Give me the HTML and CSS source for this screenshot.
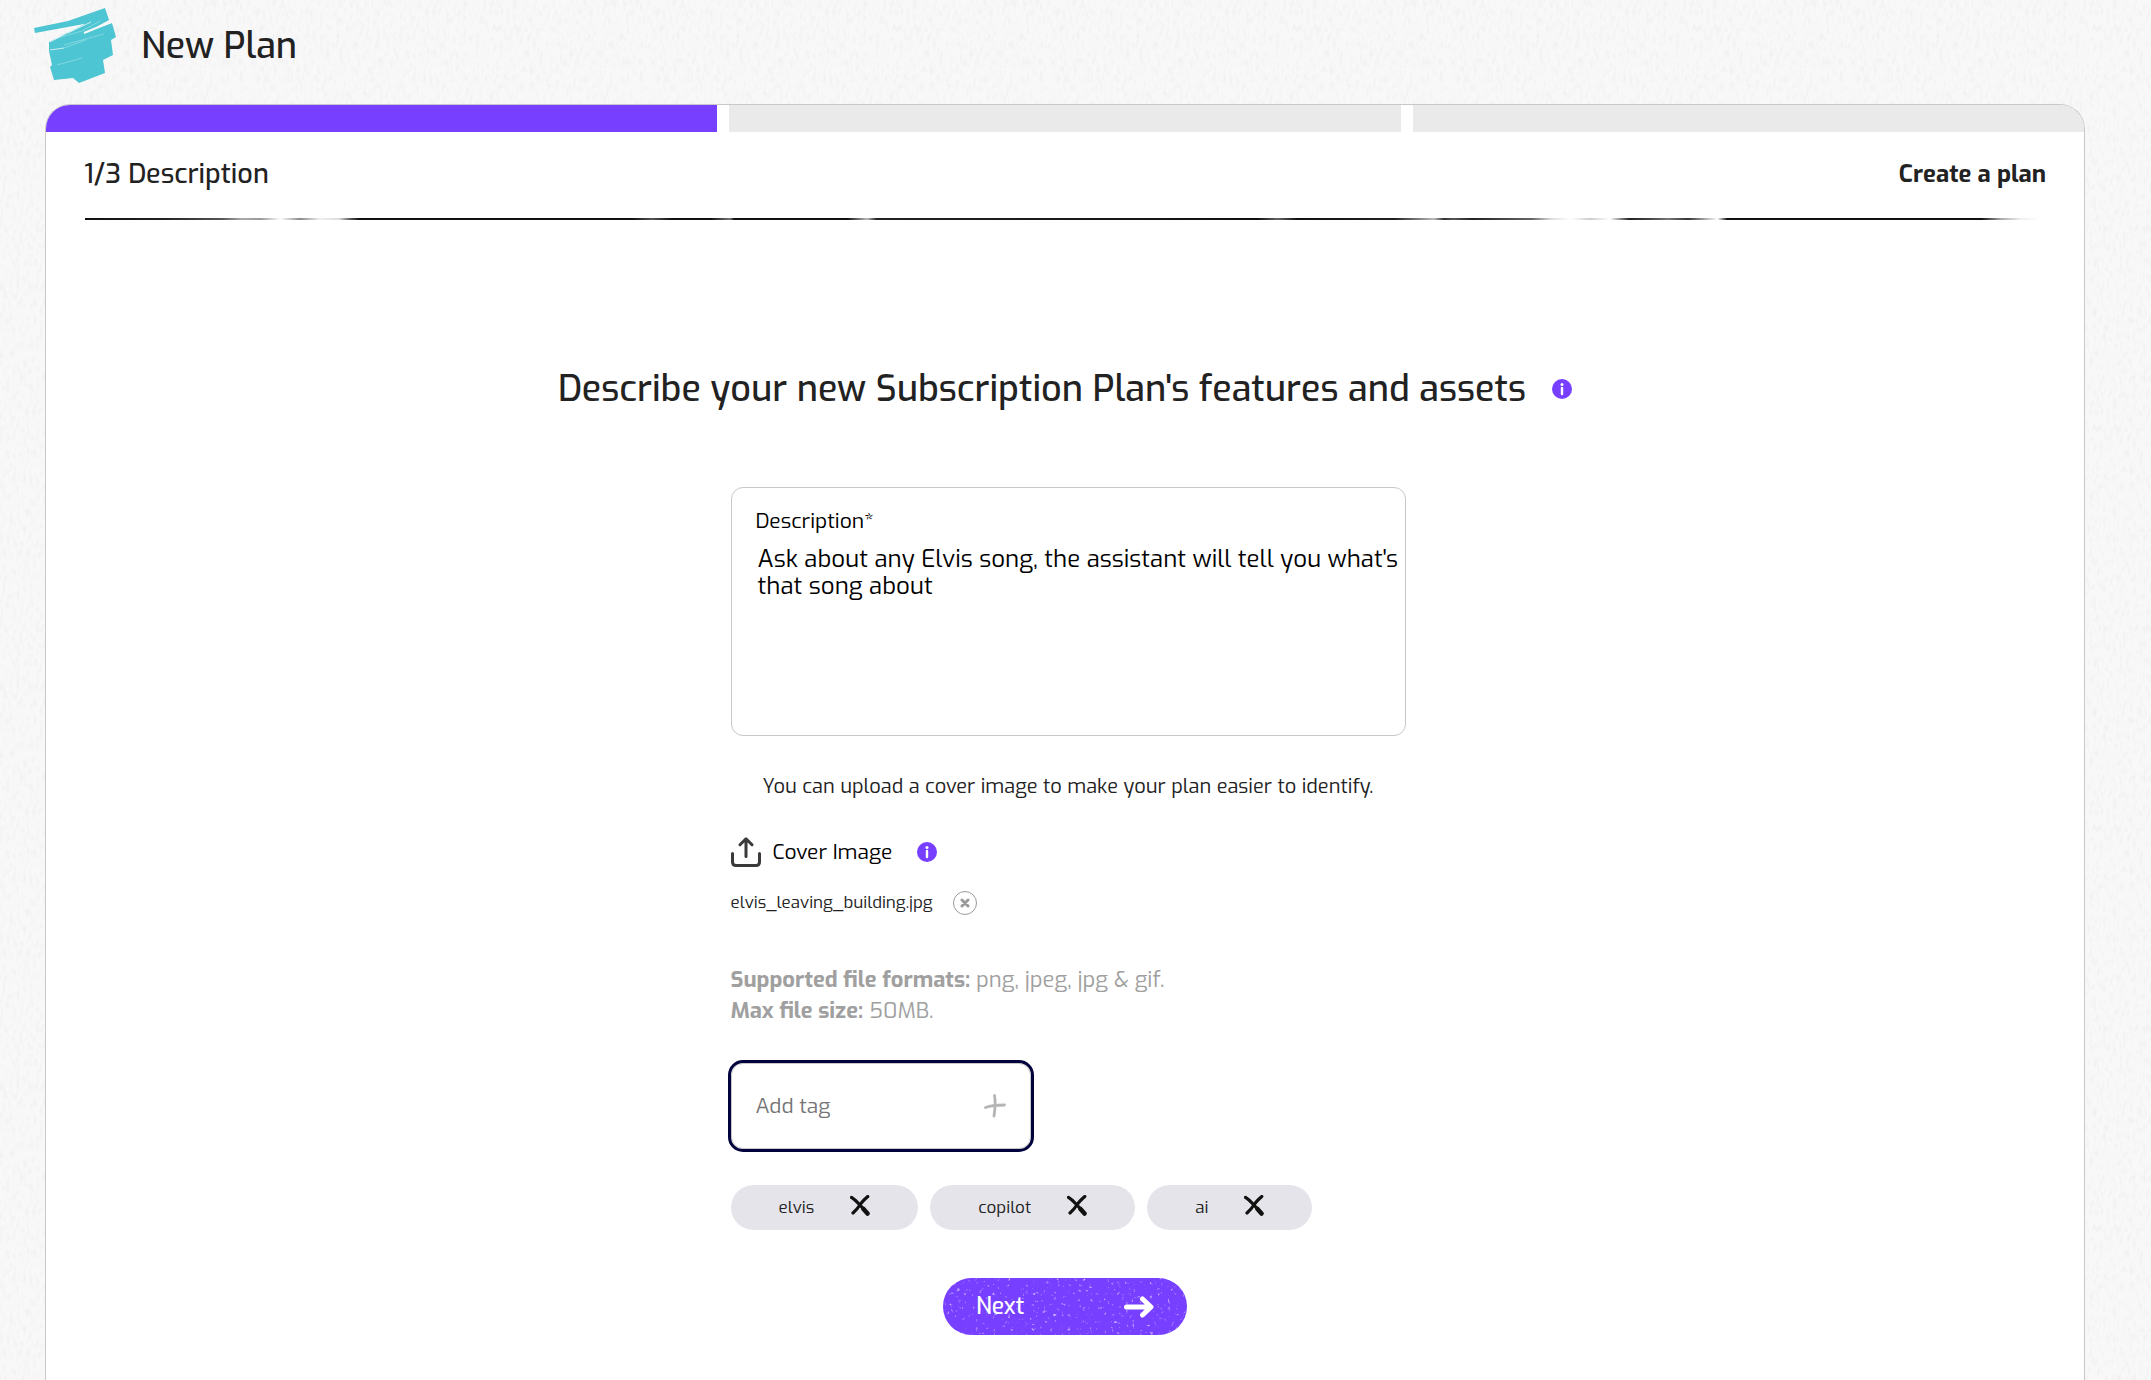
FILE: index.html
```html
<!DOCTYPE html>
<html lang="en">
<head>
<meta charset="utf-8">
<meta name="viewport" content="width=device-width, initial-scale=1">
<title>New Plan</title>
<link rel="stylesheet" href="styles.css">
</head>
<body>
<svg class="sprite" aria-hidden="true">
  <symbol id="cross" viewBox="0 0 20 21">
    <path d="M1.5 2.4Q5 4.5 9.5 9.5T17.500 18.500M17.800 1.500Q12 6.500 9.500 10.500T3 18" fill="none" stroke="#111" stroke-width="3.200" stroke-linecap="round"/>
    <path d="M13.500 14l4 4.500" stroke="#111" stroke-width="4.500" stroke-linecap="round"/>
  </symbol>
  <symbol id="info" viewBox="0 0 20 20">
    <circle cx="10" cy="10" r="10" fill="#773fff"/>
    <circle cx="10" cy="5.500" r="1.500" fill="#fff"/>
    <path d="M10 9v6" stroke="#fff" stroke-width="2.400" stroke-linecap="round"/>
  </symbol>
</svg>

<header class="page-header">
  <svg class="logo" viewBox="0 0 82 76" aria-hidden="true">
    <path fill="#4dc5d2" d="M0 20L34 13 71 0 75 12 53 24 78 15 82 29 77 32 79 47 69 52 71 65 45 75 39 70 20 72 16 59 18 57 15 43 15 34 50 16 1 25Z"/>
    <path fill="none" stroke="#fff" d="M16 42l14-2M34 25l23-11M16 34l34-18" opacity=".7"/>
    <path fill="none" stroke="#fff" d="M20 31l28-8 18-10M23 57l25-7M30 37l40-11M30 40l22-8" opacity=".3"/>
    <path fill="none" stroke="#f7f7f7" stroke-width="2" d="M50 25l27-11"/>
  </svg>
  <h1 class="page-title">New Plan</h1>
</header>

<main class="card">
  <div class="steps">
    <span class="step step-active"></span>
    <span class="step"></span>
    <span class="step"></span>
  </div>

  <div class="card-header">
    <h2 class="step-name">1/3 Description</h2>
    <p class="task-name">Create a plan</p>
  </div>
  <div class="brush-line"></div>

  <form class="form">
    <div class="question">
      <h2 class="question-text">Describe your new Subscription Plan's features and assets</h2>
      <svg class="info"><use href="#info"/></svg>
    </div>

    <div class="fields">
      <div class="description-box">
        <label class="description-label" for="description">Description*</label>
        <textarea class="description-input" id="description" rows="4">Ask about any Elvis song, the assistant will tell you what's that song about</textarea>
      </div>

      <p class="hint">You can upload a cover image to make your plan easier to identify.</p>

      <div class="cover">
        <button class="upload" type="button">
          <svg class="upload-icon" viewBox="0 0 30 30" aria-hidden="true">
            <path d="M1.500 16.500V25q0 3.500 3.500 3.500H25q3.500 0 3.500-3.500V16.500M15 19.500V2.500M9 7.800L15 1.800l6 6" fill="none" stroke="#3a3a3a" stroke-width="3" stroke-linecap="round" stroke-linejoin="round"/>
          </svg>
          Cover Image
        </button>
        <svg class="info"><use href="#info"/></svg>
      </div>

      <div class="file">
        <span>elvis_leaving_building.jpg</span>
        <button class="file-remove" type="button" aria-label="Remove file">
          <svg viewBox="0 0 10 10" width="10" height="10"><path d="M2 2l6 6M8 2L2 8" stroke="#9a9a9a" stroke-width="3" stroke-linecap="round"/></svg>
        </button>
      </div>

      <p class="limits"><b>Supported file formats:</b> png, jpeg, jpg &amp; gif.<br><b>Max file size:</b> 50MB.</p>

      <div class="tag-box">
        <input class="tag-input" type="text" placeholder="Add tag" aria-label="Add tag">
        <button class="tag-add" type="button" aria-label="Add">
          <svg viewBox="0 0 22 24" width="22" height="24"><path d="M10.500 1.500Q12 9 10 22M1.500 13.500Q8 11 20.500 11" fill="none" stroke="#b5b5b5" stroke-width="2.800" stroke-linecap="round"/></svg>
        </button>
      </div>

      <ul class="tags">
        <li class="tag">elvis <button class="tag-remove" type="button" aria-label="Remove elvis"><svg class="cross"><use href="#cross"/></svg></button></li>
        <li class="tag">copilot <button class="tag-remove" type="button" aria-label="Remove copilot"><svg class="cross"><use href="#cross"/></svg></button></li>
        <li class="tag">ai <button class="tag-remove" type="button" aria-label="Remove ai"><svg class="cross"><use href="#cross"/></svg></button></li>
      </ul>
    </div>

    <button class="next" type="submit">
      Next
      <svg viewBox="0 0 30 22" width="30" height="22" aria-hidden="true"><path d="M2.500 11H26M18.500 3l8.500 8-8.500 8" fill="none" stroke="#fff" stroke-width="5" stroke-linecap="round" stroke-linejoin="round"/></svg>
    </button>
  </form>
</main>
</body>
</html>
```
FILE: styles.css
```css
* {
  box-sizing: border-box;
}

body {
  margin: 0;
  min-height: 100vh;
  display: flex;
  flex-direction: column;
  padding: 0 66px 0 45px;
  font-family: Exo, Roboto, "Liberation Sans", sans-serif;
  color: #222;
  background: #f8f8f8 url("data:image/svg+xml,%3Csvg xmlns='http://www.w3.org/2000/svg' width='400' height='400'%3E%3Cfilter id='n' x='0' y='0' width='1' height='1'%3E%3CfeTurbulence type='fractalNoise' baseFrequency='.3 .12' numOctaves='3' stitchTiles='stitch'/%3E%3CfeColorMatrix values='0 0 0 0 .4 0 0 0 0 .4 0 0 0 0 .4 .25 0 0 0 -.12'/%3E%3C/filter%3E%3Crect width='400' height='400' filter='url(%23n)'/%3E%3C/svg%3E");
}

h1, h2, p, ul {
  margin: 0;
  padding: 0;
  font-weight: 400;
}

button {
  padding: 0;
  border: 0;
  background: none;
  font: inherit;
  color: inherit;
  cursor: pointer;
}

.sprite {
  display: none;
}

.page-header {
  display: flex;
  align-items: center;
  gap: 25px;
  height: 104px;
  margin-left: -11px;
  padding-bottom: 12px;
}

.logo {
  width: 82px;
  height: 76px;
}

.page-title {
  font-size: 36px;
  line-height: 44px;
  font-weight: 500;
}

.card {
  flex: 1;
  border: 1px solid #c8c8c8;
  border-bottom: 0;
  border-radius: 25px 25px 0 0;
  background: #fff;
  overflow: hidden;
}

.steps {
  display: flex;
  gap: 12px;
}

.step {
  flex: 1;
  height: 27px;
  background: #eaeaea;
}

.step-active {
  background: #773fff;
}

.card-header {
  display: flex;
  justify-content: space-between;
  align-items: center;
  height: 86px;
  padding: 0 38px 2px;
}

.step-name {
  font-size: 27px;
  line-height: 34px;
  font-weight: 500;
}

.task-name {
  font-size: 24px;
  line-height: 34px;
  font-weight: 700;
}

.brush-line {
  height: 2px;
  margin: 0 44px 0 39px;
  background: linear-gradient(90deg, #111 0, #222 4%, #555 7%, #aaa 8%, #999 9%, #fff 10%, #888 11%, #eee 12%, #ddd 13%, #666 13.500%, #111 14%, #111 28%, #555 29%, #111 30%, #111 32%, #777 33%, #111 33.200%, #111 39%, #bbb 40%, #222 40.500%, #111 60%, #666 61%, #111 62%, #222 67%, #bbb 69%, #333 69.500%, #555 70%, #222 71%, #666 74%, #ddd 75%, #fff 76%, #ccc 77%, #fff 78%, #222 79%, #444 80%, #777 81%, #333 82%, #fff 83.500%, #111 84%, #111 97%, #aaa 98%, #eee 99%, #fff 100%);
}

.form {
  display: flex;
  flex-direction: column;
  align-items: center;
  padding: 144px 38px 46px;
}

.question {
  display: flex;
  align-items: center;
  gap: 26px;
}

.question-text {
  font-size: 36px;
  line-height: 50px;
  font-weight: 500;
}

.info {
  flex: none;
  width: 20px;
  height: 20px;
}

.fields {
  width: 100%;
  max-width: 675px;
  margin-top: 73px;
  margin-left: 6px;
}

.description-box {
  display: flex;
  flex-direction: column;
  gap: 10px;
  height: 249px;
  padding: 20px 0 10px 24px;
  border: 1px solid #c8c8c8;
  border-radius: 12px;
}

.description-label {
  font-size: 21px;
  line-height: 26px;
  color: #000;
}

.description-input {
  flex: 1;
  width: 100%;
  padding: 2px;
  border: 0;
  outline: 0;
  resize: none;
  background: none;
  color: #000;
  font: inherit;
  font-size: 24px;
  line-height: 27px;
}

.hint {
  margin-top: 37px;
  font-size: 20px;
  line-height: 28px;
  text-align: center;
}

.cover {
  display: flex;
  align-items: center;
  gap: 25px;
  margin-top: 35px;
}

.upload {
  display: flex;
  align-items: center;
  gap: 12px;
  font-size: 21px;
  line-height: 32px;
  color: #000;
}

.upload-icon {
  width: 30px;
  height: 30px;
}

.file {
  display: flex;
  align-items: center;
  gap: 20px;
  margin-top: 23px;
  font-size: 17px;
  line-height: 24px;
}

.file-remove {
  display: flex;
  align-items: center;
  justify-content: center;
  width: 24px;
  height: 24px;
  border: 1px solid #9a9a9a;
  border-radius: 50%;
}

.limits {
  margin-top: 49px;
  font-size: 22px;
  line-height: 31px;
  color: #a0a0a0;
}

.tag-box {
  display: flex;
  align-items: center;
  width: 300px;
  height: 86px;
  margin-top: 37px;
  padding: 0 24px;
  border: 1px solid #c8c8c8;
  border-radius: 12px;
  outline: 3px solid #02023c;
}

.tag-input {
  flex: 1;
  min-width: 0;
  padding: 0;
  border: 0;
  outline: 0;
  background: none;
  font: inherit;
  font-size: 21px;
}

.tag-input::placeholder {
  color: #757575;
}

.tag-add {
  display: flex;
}

.tags {
  display: flex;
  gap: 12px;
  margin-top: 36px;
  list-style: none;
}

.tag {
  display: flex;
  align-items: center;
  gap: 36px;
  height: 45px;
  padding: 0 48px;
  border-radius: 23px;
  background: #e5e4eb;
  font-size: 17px;
}

.tag-remove {
  display: flex;
  padding-bottom: 4px;
}

.cross {
  width: 20px;
  height: 21px;
}

.next {
  display: flex;
  align-items: center;
  justify-content: space-between;
  width: 244px;
  height: 57px;
  margin-top: 48px;
  padding: 0 33px;
  border-radius: 29px;
  color: #fff;
  font-size: 23px;
  font-weight: 500;
  background: #773fff url("data:image/svg+xml,%3Csvg xmlns='http://www.w3.org/2000/svg' width='244' height='57'%3E%3Cfilter id='n' x='0' y='0' width='1' height='1'%3E%3CfeTurbulence type='fractalNoise' baseFrequency='.28' numOctaves='2' seed='4'/%3E%3CfeColorMatrix values='0 0 0 0 1 0 0 0 0 1 0 0 0 0 1 3 0 0 0 -1.950'/%3E%3C/filter%3E%3Crect width='244' height='57' filter='url(%23n)'/%3E%3C/svg%3E");
}
```
